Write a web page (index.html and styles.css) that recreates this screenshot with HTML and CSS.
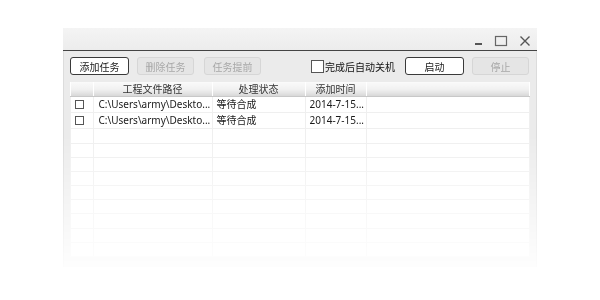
FILE: index.html
```html
<!DOCTYPE html>
<html lang="zh-CN">
<head>
  <meta charset="UTF-8">
  <title>任务列表</title>
  <link rel="stylesheet" href="styles.css">
</head>
<body>

  <div class="window">
    <div class="titlebar">
      <svg class="ctl min" width="12" height="12" viewBox="0 0 12 12"><rect x="2" y="8" width="7" height="2" fill="#555"/></svg>
      <svg class="ctl max" width="14" height="12" viewBox="0 0 14 12"><rect x="1.5" y="1.5" width="11" height="9" fill="none" stroke="#666" stroke-width="1.2"/></svg>
      <svg class="ctl close" width="12" height="12" viewBox="0 0 12 12"><path d="M1.5 1.5 L10.5 10.5 M10.5 1.5 L1.5 10.5" stroke="#555" stroke-width="1.4"/></svg>
    </div>

    <div class="toolbar">
      <button class="btn">添加任务</button>
      <button class="btn off">删除任务</button>
      <button class="btn off wide-gap">任务提前</button>
      <label class="auto-off"><span class="box"></span>完成后自动关机</label>
      <button class="btn">启动</button>
      <button class="btn off">停止</button>
    </div>

    <table class="tasks">
      <thead>
        <tr>
          <th class="c-check"></th>
          <th class="c-path">工程文件路径</th>
          <th class="c-state">处理状态</th>
          <th class="c-time">添加时间</th>
          <th></th>
        </tr>
      </thead>
      <tbody id="rows"></tbody>
    </table>
  </div>

  <script>
    const tasks = [
      { path: "C:\\Users\\army\\Deskto...", state: "等待合成", time: "2014-7-15..." },
      { path: "C:\\Users\\army\\Deskto...", state: "等待合成", time: "2014-7-15..." }
    ];

    function renderRows() {
      const body = document.getElementById("rows");
      tasks.forEach(t => {
        const tr = document.createElement("tr");
        tr.className = "filled";
        tr.innerHTML = '<td><span class="tick"></span></td><td></td><td></td><td></td><td></td>';
        tr.children[1].textContent = t.path;
        tr.children[2].textContent = t.state;
        tr.children[3].textContent = t.time;
        body.appendChild(tr);
      });
      // empty rows fill the rest of the list
      for (let i = 0; i < 9; i++) {
        const tr = document.createElement("tr");
        tr.innerHTML = "<td></td><td></td><td></td><td></td><td></td>";
        body.appendChild(tr);
      }
    }

    renderRows();
  </script>

</body>
</html>
```

FILE: styles.css
```css
body {
  margin: 0;
  background: #fff;
  font-family: "Noto Sans", "Noto Sans CJK SC", sans-serif;
  font-size: 10px;
  color: #1a1a1a;
}

.window {
  margin: 28px 0 0 63px;
  width: 474px;
  height: 239px;
  background: #ebebeb;
  box-shadow: inset 1px 0 0 #dcdcdc, inset -1px 0 0 #dcdcdc;
  -webkit-mask-image: linear-gradient(to bottom, #000 45%, rgba(0,0,0,0.08) 100%);
  mask-image: linear-gradient(to bottom, #000 45%, rgba(0,0,0,0.08) 100%);
}

.titlebar {
  height: 22px;
  background: linear-gradient(#f4f4f4, #ececec);
  border-bottom: 1px solid #444;
  display: flex;
  justify-content: flex-end;
  align-items: center;
  padding: 0 6px 0 0;
}

.ctl {
  display: block;
  margin-top: 3px;
}

.ctl.max {
  margin: 3px 11px 0 9px;
}

.toolbar {
  display: flex;
  align-items: center;
  box-sizing: border-box;
  height: 31px;
  padding: 6px 8px 7px 7px;
}

.btn {
  width: 59px;
  height: 18px;
  margin-right: 8px;
  padding: 0;
  background: #fff;
  border: 1px solid #3a3a3a;
  border-radius: 3px;
  font-family: inherit;
  font-size: 10px;
  color: #222;
}

.btn.off {
  width: 57px;
  background: #e5e5e5;
  border-color: #d6d6d6;
  color: #a8a8a8;
}

.btn.wide-gap {
  margin-left: 2px;
}

.auto-off {
  display: flex;
  align-items: center;
  margin-left: auto;
  margin-right: 10px;
  color: #111;
}

.box {
  width: 11px;
  height: 11px;
  background: #fff;
  border: 1px solid #555;
  margin-right: 1px;
}

.toolbar .btn:last-child {
  margin-right: 0;
}

.tasks {
  margin-left: 7px;
  width: 460px;
  height: 175px;
  border-collapse: collapse;
  table-layout: fixed;
  background: #fff;
}

.tasks th {
  height: 14px;
  padding: 0;
  font-weight: normal;
  color: #333;
  background: linear-gradient(#fafafa, #f0f0f0 55%, #d8d8d8);
  border-right: 1px solid #fff;
  border-left: 1px solid #d2d2d2;
  border-bottom: 1px solid #c8c8c8;
  line-height: 13px;
}

.tasks th:first-child {
  border-left: none;
}

.c-check { width: 22px; }
.c-path { width: 118px; }
.c-state { width: 92px; }
.c-time { width: 60px; }

.tasks td {
  height: 13px;
  padding: 0 0 0 4px;
  border: 1px solid #efefef;
  white-space: nowrap;
  overflow: hidden;
  line-height: 13px;
}

.tasks td:nth-child(2) {
  padding-left: 5px;
}

.tasks tr.filled td {
  height: 15px;
}

.tick {
  display: block;
  width: 7px;
  height: 7px;
  border: 1px solid #555;
  background: #fff;
}
```
